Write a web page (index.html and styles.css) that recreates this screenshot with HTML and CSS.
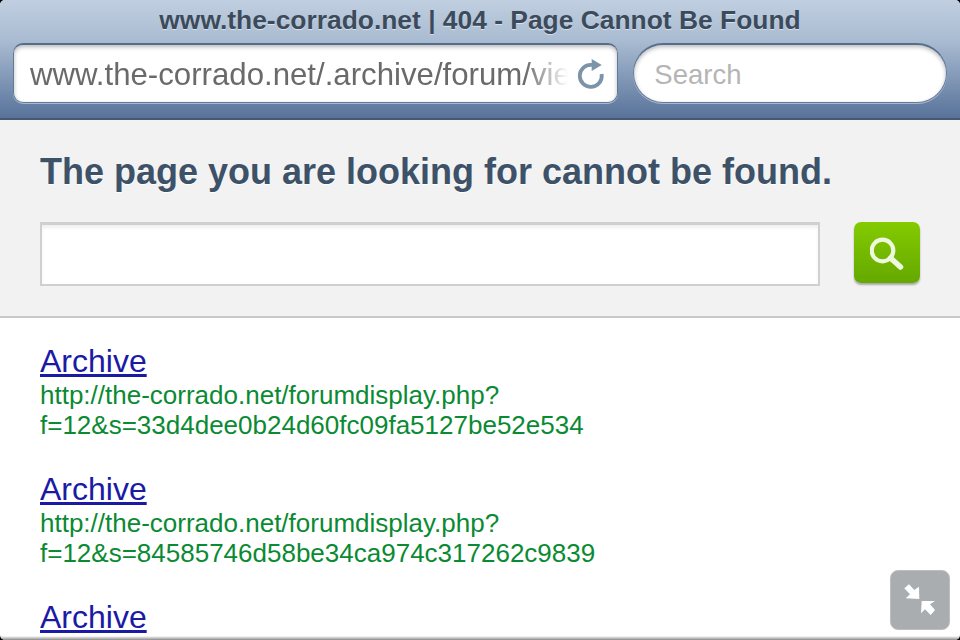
FILE: index.html
```html
<!DOCTYPE html>
<html lang="en">
<head>
  <meta charset="UTF-8">
  <title>www.the-corrado.net | 404 - Page Cannot Be Found</title>
  <link rel="stylesheet" href="styles.css">
</head>
<body>
  <div class="screen">

    <!-- Browser toolbar -->
    <div class="toolbar">
      <div class="page-title">www.the-corrado.net | 404 - Page Cannot Be Found</div>
      <div class="bar-row">
        <div class="url-field">
          <span class="url-text">www.the-corrado.net/.archive/forum/view</span>
          <svg class="reload" width="30" height="32" viewBox="0 0 30 32">
            <path d="M25.600 15A11 11 0 1 1 16 6" fill="none" stroke="#7d93a9" stroke-width="3.800"/>
            <path d="M15.700 0 25.700 6 15.700 12Z" fill="#7d93a9"/>
          </svg>
        </div>
        <div class="search-field">Search</div>
      </div>
    </div>

    <!-- 404 search panel -->
    <div class="panel">
      <h1>The page you are looking for cannot be found.</h1>
      <div class="search-row">
        <div class="site-input"></div>
        <div class="go-btn">
          <svg width="34" height="34" viewBox="0 0 34 34">
            <circle cx="12.500" cy="14.500" r="10.800" fill="none" stroke="#eef8de" stroke-width="4.200"/>
            <path d="M20.500 22 30.500 31" stroke="#eef8de" stroke-width="5.500" stroke-linecap="round"/>
          </svg>
        </div>
      </div>
    </div>

    <!-- Results -->
    <div class="results">
      <div class="result">
        <a class="result-title" href="#">Archive</a>
        <div class="result-url">http://the-corrado.net/forumdisplay.php?<br>f=12&amp;s=33d4dee0b24d60fc09fa5127be52e534</div>
      </div>
      <div class="result">
        <a class="result-title" href="#">Archive</a>
        <div class="result-url">http://the-corrado.net/forumdisplay.php?<br>f=12&amp;s=84585746d58be34ca974c317262c9839</div>
      </div>
      <div class="result">
        <a class="result-title" href="#">Archive</a>
      </div>
    </div>

    <!-- Exit fullscreen button -->
    <div class="shrink-btn">
      <svg width="34" height="34" viewBox="0 0 34 34">
        <path d="M16.300 16 16 3.700 11.300 7 6 1.300 1.300 5.300 7 11.300 2.700 15.300Z" fill="#fff"/>
        <path d="M18.700 18 32 18 27 21.300 32 27 27.700 32 22 26.300 18 30.300Z" fill="#fff"/>
      </svg>
    </div>

    <div class="bottom-edge"></div>
  </div>
</body>
</html>
```

FILE: styles.css
```css
* { box-sizing: border-box; margin: 0; padding: 0; }
html, body { height: 100%; }
body { background: #000; font-family: "Liberation Sans", Arial, sans-serif; overflow: hidden; }

.screen { position: relative; width: 960px; height: 640px; background: #fff; border-radius: 5px; overflow: hidden; }

.toolbar { height: 120px; padding: 0 13px; background: linear-gradient(#c0cfe0 0%, #a9bbd1 35%, #7f96b5 68%, #58729a 100%); border-bottom: 2px solid #44586f; }
.page-title { height: 43px; padding-top: 5px; text-align: center; font-size: 26.400px; line-height: 30px; font-weight: bold; color: #3c4b5c; text-shadow: 0 1px 0 rgba(255,255,255,0.5); }
.bar-row { display: flex; gap: 15px; }

.url-field { width: 606px; height: 60px; padding: 2px 11px 0 16px; display: flex; align-items: center; justify-content: space-between; background: #fff; border: 1px solid #627a9a; border-top: 2px solid #566e8e; border-radius: 10px; box-shadow: inset 0 2px 4px rgba(0,0,0,0.28), 0 1px 0 rgba(255,255,255,0.45); }
.url-text { width: 538px; overflow: hidden; white-space: nowrap; font-size: 31.200px; color: #6a6a6a; -webkit-mask-image: linear-gradient(90deg, #000 92%, transparent 100%); mask-image: linear-gradient(90deg, #000 92%, transparent 100%); }
.reload { flex: none; }

.search-field { width: 314px; height: 60px; padding: 2px 0 0 20px; display: flex; align-items: center; background: #fff; border: 1px solid #627a9a; border-top: 2px solid #566e8e; border-radius: 30px; box-shadow: inset 0 2px 4px rgba(0,0,0,0.28), 0 1px 0 rgba(255,255,255,0.45); font-size: 27.500px; color: #b5b5b5; }

.panel { height: 198px; padding: 30px 40px 0 40px; background: #f2f2f2; border-bottom: 2px solid #c8c8c8; }
h1 { font-size: 36px; line-height: 44px; color: #3d5268; text-shadow: 0 1px 0 #fff; }
.search-row { margin-top: 28px; display: flex; justify-content: space-between; }
.site-input { width: 780px; height: 64px; background: #fff; border: 2px solid #d0d0d0; border-top-width: 3px; box-shadow: inset 0 3px 3px rgba(0,0,0,0.06); }
.go-btn { width: 66px; height: 61px; display: flex; align-items: center; justify-content: center; background: linear-gradient(#84cb00, #65a800); border-radius: 7px; box-shadow: 0 2px 2px rgba(0,0,0,0.3); }

.results { padding: 23px 40px 0 40px; }
.result { height: 128px; }
.result-title { display: block; font-size: 32px; line-height: 40px; color: #1a1aa6; text-decoration: underline; }
.result-url { margin-top: -1px; font-size: 26px; line-height: 30px; color: #0a8a33; }

.shrink-btn { position: absolute; left: 890px; top: 570px; width: 60px; height: 60px; display: flex; align-items: center; justify-content: center; background: #a9adb0; border: 1px solid #bcbfc2; border-radius: 8px; }
.bottom-edge { position: absolute; left: 0; right: 0; bottom: 0; height: 4px; background: linear-gradient(rgba(136,136,136,0), #8a8a8a); }
```
